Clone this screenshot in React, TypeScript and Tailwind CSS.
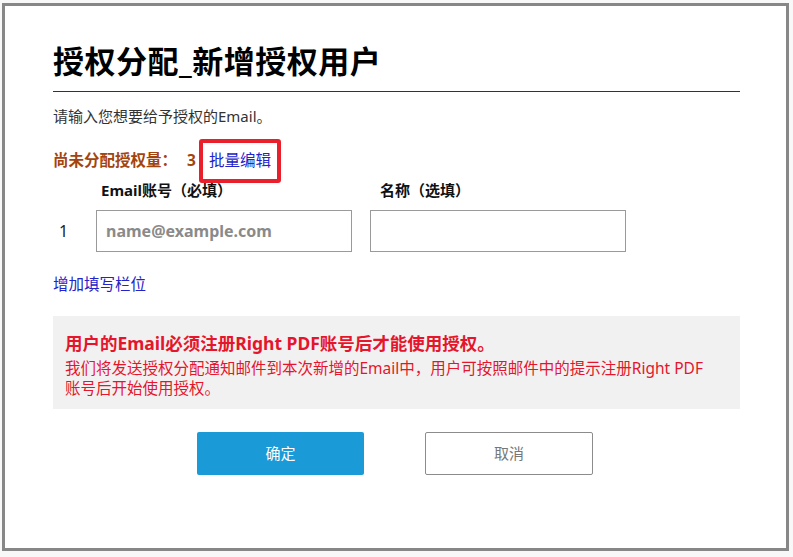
import React from "react";

const font = { fontFamily: '"Noto Sans", "Noto Sans CJK SC", sans-serif' };

function App() {
  return (
    <div className="w-[793px] h-[557px] bg-[#f8f8f8] pl-[2px] pt-[3px] overflow-hidden" style={font}>
      <div className="w-[787px] h-[548px] border-[3px] border-[#878787] bg-white pl-[48px] pr-[46px] pt-[33px]">
        <h1 className="text-[31px] font-bold text-black leading-[44px] tracking-[0.5px]">授权分配_新增授权用户</h1>
        <div className="mt-[8px] h-px bg-[#333]" />
        <p className="mt-[13px] text-[15px] text-[#333] leading-[22px]">请输入您想要给予授权的Email。</p>

        <div className="mt-[12px] flex items-center h-[44px]">
          <span className="text-[15.5px] font-bold text-[#a3440f]">尚未分配授权量：</span>
          <span className="ml-[10px] text-[15.5px] font-bold text-[#a3440f]">3</span>
          <span className="ml-[3px] px-[6px] h-[44px] flex items-center border-[4px] border-[#e9202b] rounded-[3px] text-[15.5px] text-[#2323c8]">批量编辑</span>
        </div>

        <div className="-mt-[4px] flex text-[15px] font-bold text-[#111] leading-[22px]">
          <span className="ml-[48px] w-[279px]">Email账号（必填）</span>
          <span>名称（选填）</span>
        </div>

        <div className="mt-[9px] flex items-center">
          <span className="w-[43px] pl-[6px] text-[16px] text-[#222]">1</span>
          <div className="w-[256px] h-[42px] border border-[#9a9a9a] flex items-center px-[9px] text-[16px] font-bold text-[#8a8a8a]">name@example.com</div>
          <div className="ml-[18px] w-[256px] h-[42px] border border-[#9a9a9a]" />
        </div>

        <p className="mt-[21px] text-[15.5px] text-[#2323c8] leading-[22px]">增加填写栏位</p>

        <div className="mt-[21px] bg-[#f1f1f1] h-[93px] pt-[14px] pl-[12px] pr-[20px] text-[#e5152b]">
          <p className="text-[17.5px] font-bold leading-[26px]">用户的Email必须注册Right PDF账号后才能使用授权。</p>
          <p className="mt-[2px] text-[15.5px] leading-[20px]">
            我们将发送授权分配通知邮件到本次新增的Email中，用户可按照邮件中的提示注册Right PDF
            <br />
            账号后开始使用授权。
          </p>
        </div>

        <div className="mt-[23px] flex gap-[61px] pl-[144px]">
          <button className="w-[167px] h-[43px] bg-[#1a9ad6] rounded-[2px] text-white text-[15px]">确定</button>
          <button className="w-[168px] h-[43px] bg-white border border-[#8c8c8c] rounded-[2px] text-[#777] text-[15px]">取消</button>
        </div>
      </div>
    </div>
  );
}

export default App;
